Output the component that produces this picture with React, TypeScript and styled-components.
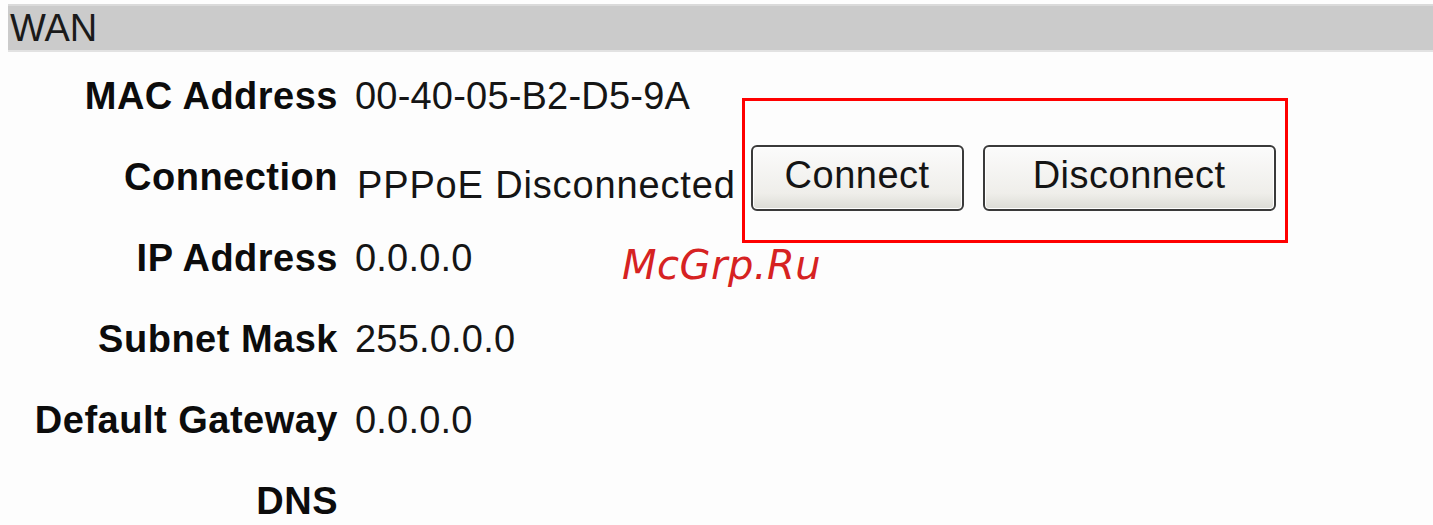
import styled, { createGlobalStyle } from "styled-components";

const GlobalStyle = createGlobalStyle`
  html, body {
    margin: 0;
    padding: 0;
    background: #fdfdfd;
  }
  body {
    font-family: "Liberation Sans", Arial, sans-serif;
    color: #111;
  }
`;

type Row = { label: string; value?: string; actions?: boolean };

const rows: Row[] = [
  { label: "MAC Address", value: "00-40-05-B2-D5-9A" },
  { label: "Connection", value: "PPPoE Disconnected", actions: true },
  { label: "IP Address", value: "0.0.0.0" },
  { label: "Subnet Mask", value: "255.0.0.0" },
  { label: "Default Gateway", value: "0.0.0.0" },
  { label: "DNS" },
];

export default function App() {
  return (
    <Page>
      <GlobalStyle />
      <SectionHeader>WAN</SectionHeader>
      <InfoTable>
        {rows.map((r) => (
          <InfoRow key={r.label}>
            <Label>{r.label}</Label>
            <ValueCell>
              {r.value && <Value $status={r.actions}>{r.value}</Value>}
              {r.actions && (
                <ButtonGroup>
                  <ActionButton $width={213}>Connect</ActionButton>
                  <ActionButton $width={293}>Disconnect</ActionButton>
                  <Highlight />
                </ButtonGroup>
              )}
            </ValueCell>
          </InfoRow>
        ))}
      </InfoTable>
      <Watermark>McGrp.Ru</Watermark>
    </Page>
  );
}

const Page = styled.div`
  position: relative;
  width: 1433px;
  height: 525px;
  overflow: hidden;
  padding-top: 4px;
  box-sizing: border-box;
`;

const SectionHeader = styled.div`
  margin-left: 8px;
  height: 48px;
  box-sizing: border-box;
  background: #cbcbcb;
  border-top: 2px solid #dadada;
  border-bottom: 2px solid #e2e2e2;
  padding-left: 2px;
  font-size: 38px;
  line-height: 44px;
  color: #1a1a1a;
`;

const InfoTable = styled.div`
  display: flex;
  flex-direction: column;
  padding-top: 4px;
`;

const InfoRow = styled.div`
  display: grid;
  grid-template-columns: 330px 1fr;
  column-gap: 17px;
  align-items: center;
  height: 81px;
  margin-left: 8px;
`;

const Label = styled.div`
  text-align: right;
  font-weight: 700;
  font-size: 38px;
  letter-spacing: 0.5px;
  color: #0c0c0c;
  white-space: nowrap;
`;

const ValueCell = styled.div`
  display: flex;
  align-items: center;
  gap: 15px;
`;

const Value = styled.span<{ $status?: boolean }>`
  font-size: 38px;
  color: #151515;
  white-space: nowrap;
  padding-top: ${(p) => (p.$status ? "16px" : "0")};
  margin-left: ${(p) => (p.$status ? "2px" : "0")};
  letter-spacing: ${(p) => (p.$status ? "0.85px" : "0.2px")};
`;

const ButtonGroup = styled.div`
  position: relative;
  display: flex;
  gap: 19px;
`;

const ActionButton = styled.button<{ $width: number }>`
  width: ${(p) => p.$width}px;
  height: 66px;
  border: 2px solid #3a3a3a;
  border-radius: 6px;
  background: linear-gradient(#fbfbfb, #efeeea 75%, #dcdcd6);
  box-shadow: inset 0 0 0 1px #fff;
  font-family: "Liberation Sans", Arial, sans-serif;
  font-size: 38px;
  letter-spacing: 0.5px;
  color: #141414;
  padding: 0;
  padding-bottom: 4px;
  cursor: pointer;
`;

const Highlight = styled.div`
  position: absolute;
  left: -9px;
  top: -47px;
  width: 546px;
  height: 145px;
  border: 3px solid #ff0000;
  box-sizing: border-box;
  pointer-events: none;
`;

const Watermark = styled.div`
  position: absolute;
  left: 622px;
  top: 242px;
  font-family: "DejaVu Sans", sans-serif;
  font-style: italic;
  font-size: 40px;
  color: #d62222;
  letter-spacing: 0.5px;
`;
